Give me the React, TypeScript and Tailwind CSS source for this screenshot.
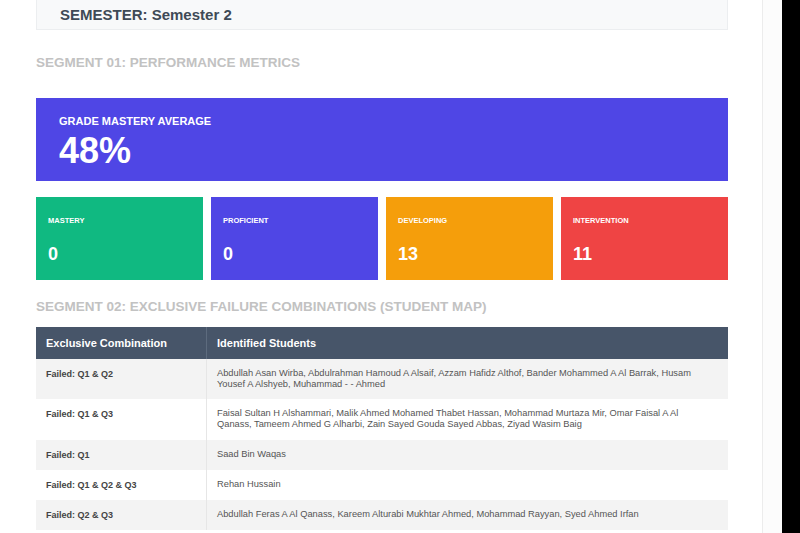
export default function App() {
  const rows = [
    ["Failed: Q1 & Q2", "Abdullah Asan Wirba, Abdulrahman Hamoud A Alsaif, Azzam Hafidz Althof, Bander Mohammed A Al Barrak, Husam Yousef A Alshyeb, Muhammad - - Ahmed", "h-[40px]"],
    ["Failed: Q1 & Q3", "Faisal Sultan H Alshammari, Malik Ahmed Mohamed Thabet Hassan, Mohammad Murtaza Mir, Omar Faisal A Al Qanass, Tameem Ahmed G Alharbi, Zain Sayed Gouda Sayed Abbas, Ziyad Wasim Baig", "h-[41px]"],
    ["Failed: Q1", "Saad Bin Waqas", "h-[30px]"],
    ["Failed: Q1 & Q2 & Q3", "Rehan Hussain", "h-[30px]"],
    ["Failed: Q2 & Q3", "Abdullah Feras A Al Qanass, Kareem Alturabi Mukhtar Ahmed, Mohammad Rayyan, Syed Ahmed Irfan", "h-[30px]"],
  ];
  const cards = [
    ["MASTERY", "0", "bg-[#10b981]"],
    ["PROFICIENT", "0", "bg-[#4f46e5]"],
    ["DEVELOPING", "13", "bg-[#f59e0b]"],
    ["INTERVENTION", "11", "bg-[#ef4444]"],
  ];
  return (
    <div className="flex h-[533px] w-[800px] overflow-hidden bg-black" style={{ fontFamily: '"Liberation Sans", Arial, sans-serif' }}>
      <div className="w-[763px] bg-white border-r border-[#ececec] pl-[36px] pr-[34px] shrink-0">
        <div className="h-[30px] bg-[#f8f9fa] border border-[#eceef0] border-t-0 px-[23px] pt-[4px] text-[15px] font-bold text-[#3f4a56]">SEMESTER: Semester 2</div>
        <div className="mt-[25px] text-[13.5px] font-bold text-[#c2c2c2] leading-[16px]">SEGMENT 01: PERFORMANCE METRICS</div>
        <div className="mt-[27px] h-[83px] bg-[#4f46e5] px-[23px] pt-[17px] text-white">
          <div className="text-[11px] font-bold leading-[13px]">GRADE MASTERY AVERAGE</div>
          <div className="text-[36px] font-bold leading-[40px] mt-[3px]">48%</div>
        </div>
        <div className="mt-[16px] grid grid-cols-4 gap-[8px]">
          {cards.map(([l, v, c]) => (
            <div key={l} className={`${c} h-[83px] px-[12px] pt-[19px] text-white`}>
              <div className="text-[7.5px] font-bold leading-[9px]">{l}</div>
              <div className="text-[18px] font-bold mt-[18px] leading-[22px]">{v}</div>
            </div>
          ))}
        </div>
        <div className="mt-[19px] text-[13.5px] font-bold text-[#c2c2c2] leading-[16px]">SEGMENT 02: EXCLUSIVE FAILURE COMBINATIONS (STUDENT MAP)</div>
        <div className="mt-[12px]">
          <div className="flex h-[32px] bg-[#475569] text-white text-[11px] font-bold items-center">
            <div className="w-[171px] px-[10px] border-r border-[#5d6b7e] h-full flex items-center">Exclusive Combination</div>
            <div className="px-[10px]">Identified Students</div>
          </div>
          {rows.map(([a, b, h], i) => (
            <div key={a} className={`flex ${h} ${i % 2 === 0 ? "bg-[#f3f3f3]" : "bg-white"}`}>
              <div className="w-[171px] px-[10px] pt-[9px] text-[9px] font-bold text-[#444] border-r border-[#e6e6e6]">{a}</div>
              <div className="flex-1 px-[10px] pt-[9px] text-[9.3px] leading-[11px] text-[#555] pr-[24px]">{b}</div>
            </div>
          ))}
        </div>
      </div>
      <div className="w-[19px] bg-[#fcfcfc] shrink-0" />
    </div>
  );
}
